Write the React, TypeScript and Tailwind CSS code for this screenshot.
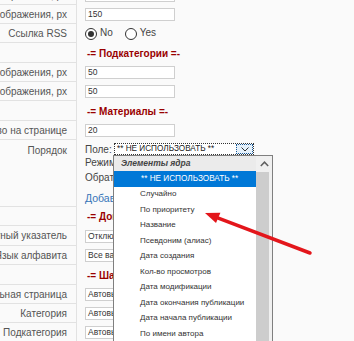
import React from "react";

const labelCell =
  "w-[77px] shrink-0 flex justify-end items-center pr-[9px] border-r border-b border-[#e2e2e2] text-[10px] text-[#555] whitespace-nowrap";

function Row({ label, h, children }: { label?: string; h: string; children?: React.ReactNode }) {
  return (
    <div className={`flex ${h}`}>
      <div className={labelCell}>{label}</div>
      <div className="flex-1 flex items-center pl-[8px]">{children}</div>
    </div>
  );
}

function Field({ value }: { value: string }) {
  return (
    <div className="w-[90px] h-[13px] bg-white border border-[#cfcfcf] flex items-center px-[2px] text-[8.5px] text-[#333]">
      {value}
    </div>
  );
}

function Section({ title }: { title: string }) {
  return <span className="pl-[2px] text-[10px] font-bold text-[#990000] whitespace-nowrap">{title}</span>;
}

function Radio({ checked, label }: { checked?: boolean; label: string }) {
  return (
    <div className="flex items-center gap-[3px] mr-[12px]">
      <span className="w-[12px] h-[12px] rounded-full border border-[#333] bg-white flex items-center justify-center">
        {checked && <span className="w-[6px] h-[6px] rounded-full bg-[#333]" />}
      </span>
      <span className="text-[10px] text-[#444] -mt-[2px]">{label}</span>
    </div>
  );
}

const options = [
  "Случайно",
  "По приоритету",
  "Название",
  "Псевдоним (алиас)",
  "Дата создания",
  "Кол-во просмотров",
  "Дата модификации",
  "Дата окончания публикации",
  "Дата начала публикации",
  "По имени автора",
];

export default function App() {
  return (
    <div className="relative w-[354px] h-[341px] overflow-hidden bg-[#fafafa] font-['Liberation_Sans',Arial,sans-serif]">
      <div className="flex flex-col -mt-[14px]">
        <Row label="Высота изображения, px" h="h-[19px]">
          <Field value="" />
        </Row>
        <Row label="Ширина изображения, px" h="h-[19px]">
          <Field value="150" />
        </Row>
        <Row label="Ссылка RSS" h="h-[19px]">
          <Radio checked label="No" />
          <Radio label="Yes" />
        </Row>
        <Row h="h-[20px]">
          <Section title="-= Подкатегории =-" />
        </Row>
        <Row label="Ширина изображения, px" h="h-[19px]">
          <Field value="50" />
        </Row>
        <Row label="Высота изображения, px" h="h-[19px]">
          <Field value="50" />
        </Row>
        <Row h="h-[20px]">
          <Section title="-= Материалы =-" />
        </Row>
        <Row label="Количество на странице" h="h-[19px]">
          <Field value="20" />
        </Row>

        {/* Порядок */}
        <div className="flex h-[67px]">
          <div className={`${labelCell} !items-start pt-[3px]`}>Порядок</div>
          <div className="flex-1 flex flex-col pl-[8px] pt-[3px] text-[10px] text-[#444]">
            <div className="flex items-center h-[12px]">
              <span className="w-[29px]">Поле:</span>
              <div className="w-[140px] h-[12px] flex border border-dotted border-[#333] bg-white">
                <span className="flex-1 pl-[2px] text-[8.2px] leading-[10px] text-[#222] whitespace-nowrap">
                  ** НЕ ИСПОЛЬЗОВАТЬ **
                </span>
                <span className="w-[17px] h-full bg-[#e5f1fb] border border-dotted border-[#1c5a96] flex items-center justify-center">
                  <svg width="8" height="5" viewBox="0 0 8 5">
                    <polyline points="0.5,0.5 4,4 7.5,0.5" fill="none" stroke="#333" strokeWidth="1" />
                  </svg>
                </span>
              </div>
            </div>
            <div className="h-[15px] flex items-center whitespace-nowrap">Режим: прямой</div>
            <div className="h-[15px] flex items-center whitespace-nowrap">Обратный порядок</div>
            <div className="mt-[6px] h-[16px] flex items-center text-[10.5px] text-[#3574b8] whitespace-nowrap">
              Добавить поле
            </div>
          </div>
        </div>

        <Row h="h-[19px]">
          <Section title="-= Дополнительно =-" />
        </Row>
        <Row label="Алфавитный указатель" h="h-[20px]">
          <Field value="Отключено" />
        </Row>
        <Row label="Язык алфавита" h="h-[19px]">
          <Field value="Все варианты" />
        </Row>
        <Row h="h-[20px]">
          <Section title="-= Шаблоны =-" />
        </Row>
        <Row label="Начальная страница" h="h-[19px]">
          <Field value="Автовыбор" />
        </Row>
        <Row label="Категория" h="h-[19px]">
          <Field value="Автовыбор" />
        </Row>
        <Row label="Подкатегория" h="h-[19px]">
          <Field value="Автовыбор" />
        </Row>
      </div>

      {/* open select list */}
      <div className="absolute left-[113px] top-[155px] w-[160px] h-[200px] flex border border-[#7f7f7f] bg-white">
        <div className="flex-1 flex flex-col text-[8px] text-[#333]">
          <div className="h-[15px] flex items-center pl-[7px] bg-[#ebebeb] italic font-bold text-[8.5px] text-[#444]">
            Элементы ядра
          </div>
          <div className="h-[15.5px] flex items-center pl-[27px] bg-[#0078d7] text-white text-[8.2px]">
            ** НЕ ИСПОЛЬЗОВАТЬ **
          </div>
          {options.map((o) => (
            <div key={o} className="h-[15.5px] flex items-center pl-[26px] whitespace-nowrap">
              {o}
            </div>
          ))}
        </div>
        <div className="w-[16px] flex flex-col bg-[#f0f0f0]">
          <div className="h-[16px] flex items-center justify-center">
            <svg width="9" height="6" viewBox="0 0 9 6">
              <polyline points="0.8,5 4.5,1.2 8.2,5" fill="none" stroke="#606060" strokeWidth="1.5" />
            </svg>
          </div>
          <div className="flex-1 mr-[3px] bg-[#cdcdcd]" />
        </div>
      </div>

      {/* red pointer arrow */}
      <svg className="absolute left-0 top-0 pointer-events-none" width="354" height="341" viewBox="0 0 354 341">
        <line x1="310" y1="253" x2="217" y2="217.6" stroke="#e3161b" strokeWidth="3.5" strokeLinecap="round" />
        <polygon points="205,213 220.4,212.8 216,223" fill="#e3161b" />
      </svg>
    </div>
  );
}
